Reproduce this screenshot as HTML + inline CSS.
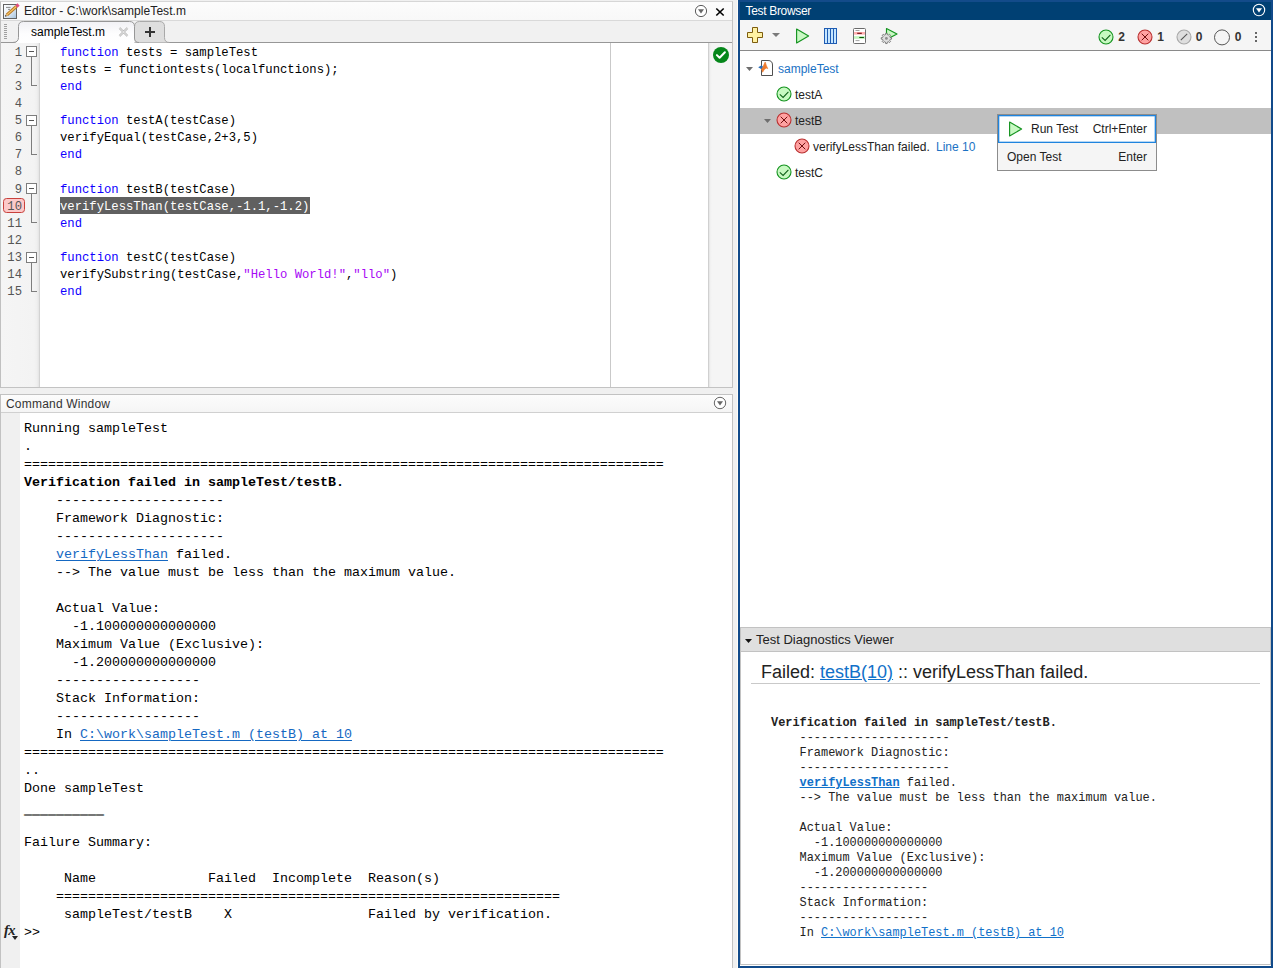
<!DOCTYPE html>
<html lang="en">
<head>
<meta charset="utf-8">
<title>MATLAB Test Browser</title>
<style>
*{box-sizing:border-box;margin:0;padding:0}
html,body{width:1273px;height:968px;overflow:hidden;background:#f0f0f0}
body{position:relative;font-family:"Liberation Sans",sans-serif;font-size:12px;color:#1a1a1a}
.abs{position:absolute}
a{color:#1171c9}
/* ---------- Editor panel ---------- */
#ed{left:0;top:1px;width:733px;height:387px;background:#fff;border:1px solid #c3c3c3;border-top-color:#d6d6d6;border-left-color:#c0c0c0}
#ed-title{left:1px;top:2px;width:731px;height:19px;background:linear-gradient(#fcfcfc,#f8f8f8);border-bottom:1px solid #d9d9d9}
#ed-title .t{left:23px;top:2px;font-size:12px;line-height:15px;color:#222;letter-spacing:.07px;white-space:nowrap}
#ed-tabs{left:1px;top:21px;width:731px;height:22px;background:#f1f1f1;border-bottom:1px solid #979797}
#tab1{left:17px;top:0;width:117px;height:22px}
#tab1 .t{left:13px;top:4px;font-size:12px;line-height:15px;color:#000;white-space:nowrap}
#grip{left:3px;top:3px;width:3px;height:15px;background:repeating-linear-gradient(#a0a0a0 0 1px,transparent 1px 2px)}
#gutter{left:1px;top:43px;width:39px;height:344px;background:linear-gradient(90deg,#f5f5f5 0,#f3f3f3 33px,#efefef 36px,#e6e6e6 37.5px,#d3d3d3 38.5px,#d3d3d3 39px)}
#code{left:40px;top:43px;width:668px;height:344px;background:#fff}
#margin-line{left:610px;top:43px;width:1px;height:344px;background:#c9c9c9}
#msgbar{left:708px;top:43px;width:24px;height:344px;background:linear-gradient(90deg,#d0d0d0 0,#d0d0d0 .6px,#e8e8e8 1.5px,#f1f1f1 2.5px,#f5f5f5 4px)}
.mono-ed{font-family:"Liberation Mono",monospace;font-size:12.22px;line-height:17px;white-space:pre}
.ln{left:0;width:22px;text-align:right;color:#555;height:17px}
.cl{left:60px;height:17px;color:#000}
.kw{color:#0e00ff}
.sel{color:#fff}
.str{color:#a709f5}
.fold{width:11px;height:11px;left:26px;border:1px solid #7d7d7d;background:#fff}
.fold:after{content:"";position:absolute;left:2px;top:4px;width:5px;height:1px;background:#555}
.fv{left:31px;width:1px;background:#7d7d7d}
.fh{left:31px;width:6px;height:1px;background:#7d7d7d}
/* ---------- Command window ---------- */
#cw{left:0;top:394px;width:733px;height:574px;background:#fff;border:1px solid #c2c2c2;border-bottom:0}
#cw-title{left:0;top:0;width:731px;height:18px;background:linear-gradient(#fcfcfc,#f5f5f5);border-bottom:1px solid #d0d0d0}
#cw-title .t{left:5px;top:2px;font-size:12px;line-height:15px;color:#333;letter-spacing:.2px;white-space:nowrap}
#cw-gut{left:0;top:18px;width:19px;height:556px;background:#f0f0f0}
#cw-text{left:23px;top:25px;font-family:"Liberation Mono",monospace;font-size:13.33px;line-height:18px;white-space:pre;color:#000}
#cw-text a{color:#1568c2;text-underline-offset:1.5px;text-decoration-thickness:1px}
/* ---------- Test browser ---------- */
#tb{left:738px;top:0;width:535px;height:968px;background:#fff;border:2px solid #114a8a;border-top:0}
#tb-head{left:0;top:0;width:531px;height:20px;background:#004073;border-top:2px solid #134b8a}
#tb-head .t{left:5.5px;top:2px;font-size:12px;line-height:15px;color:#fff;letter-spacing:-.32px;white-space:nowrap}
#tb-bar{left:0;top:20px;width:531px;height:31px;background:#f5f5f5;border-bottom:1px solid #8a8a8a}
.row{left:0;width:531px;height:26px}
.row .t{top:6px;font-size:12px;line-height:14px;white-space:nowrap;color:#222}
.cnt{top:10px;font-size:12px;line-height:14px;font-weight:bold;color:#333}
#menu{left:257px;top:114px;width:160px;height:57px;background:#f5f5f5;border:1px solid #8c8c8c}
#menu .it1{left:0;top:0;width:158px;height:28px;background:#fff;border:1px solid #1f84de;box-shadow:inset 0 0 0 .5px #6fb0ea}
#menu .t{font-size:12px;line-height:14px;color:#222;white-space:nowrap}
#dg-head{left:0;top:627px;width:531px;height:25px;background:#dfdfdf;border-top:1px solid #c2c2c2;border-bottom:1px solid #c2c2c2}
#dg-frame{left:0;top:627px;width:531px;height:338px;border:1px solid #c2c2c2;border-top:0}
#dg-head .t{left:16px;top:4px;font-size:13px;line-height:16px;color:#222;white-space:nowrap}
#dg-title{left:21px;top:662px;font-size:18px;line-height:21px;color:#222;white-space:nowrap}
#dg-hr{left:11px;top:683px;width:509px;height:1px;background:#c9c9c9}
#dg-text{left:31px;top:716px;font-family:"Liberation Mono",monospace;font-size:11.92px;line-height:15px;white-space:pre;color:#222}
</style>
</head>
<body>

<!-- ================= EDITOR ================= -->
<div id="ed" class="abs"></div>
<div id="ed-title" class="abs">
  <svg class="abs" style="left:2px;top:1px" width="18" height="17" viewBox="0 0 18 17">
    <defs><linearGradient id="pg" x1="0" y1="0" x2="1" y2="1"><stop offset="0" stop-color="#fff"/><stop offset=".45" stop-color="#e9f0f7"/><stop offset="1" stop-color="#a4c2dc"/></linearGradient></defs>
    <rect x="0.5" y="1.5" width="13" height="14" fill="url(#pg)" stroke="#636363"/>
    <path d="M3 4.4h4.6M5 6.4h2" stroke="#8a8a8a" stroke-width="1"/>
    <path d="M2 13.6L2.88 10.68L5 13.08z" fill="#c9a57a"/>
    <path d="M2 13.6L2.45 12.1L3.55 13.35z" fill="#1c1c1c"/>
    <path d="M2.88 10.68L12.31 2.32L14.43 4.72L5 13.08z" fill="#b97a26"/>
    <path d="M3.5 11.4L12.95 3.05L13.75 3.95L4.3 12.3z" fill="#f6c667"/>
    <path d="M12.31 2.32L14.54 .33L16.66 2.73L14.43 4.72z" fill="#e2507f"/>
  </svg>
  <div class="abs t">Editor - C:\work\sampleTest.m</div>
  <svg class="abs" style="left:693px;top:2px" width="14" height="14" viewBox="0 0 14 14">
    <circle cx="7" cy="7" r="5.6" fill="#fff" stroke="#5c5c5c" stroke-width="1"/>
    <path d="M4 5.3h6L7 9.6z" fill="#666"/>
  </svg>
  <svg class="abs" style="left:714px;top:4.5px" width="10" height="10" viewBox="0 0 10 10">
    <path d="M1.3 1.5L8.7 8.5M8.7 1.5L1.3 8.5" stroke="#000" stroke-width="1.6"/>
  </svg>
</div>
<div id="ed-tabs" class="abs">
  <div id="grip" class="abs"></div>
  <svg class="abs" style="left:0;top:0" width="200" height="23" viewBox="0 0 200 23">
    <defs><linearGradient id="tg" x1="0" y1="0" x2="0" y2="1"><stop offset="0" stop-color="#f1f1f5"/><stop offset=".55" stop-color="#fdfdfe"/><stop offset="1" stop-color="#fff"/></linearGradient></defs>
    <path d="M133.5 22V6Q133.5 .5 138.5 .5H158.5Q163.5 .5 163.5 5.5V16.5Q163.5 21.5 168.5 21.5H133.5z" fill="#dedede"/>
    <path d="M133.5 6Q133.5 .5 138.5 .5H158.5Q163.5 .5 163.5 5.5V16.5Q163.5 21.5 168.5 21.5" fill="none" stroke="#a9a9a9"/>
    <path d="M12.5 22Q17.5 21.5 17.5 16.5V5.5Q17.5 .5 22.5 .5H128.5Q133.5 .5 133.5 5.5V23H12.5z" fill="url(#tg)"/>
    <path d="M11.5 21.5Q17.5 21.5 17.5 16.5V5.5Q17.5 .5 22.5 .5H128.5Q133.5 .5 133.5 5.5V17Q133.5 21.5 138 21.5" fill="none" stroke="#979797"/>
    <path d="M144 11H154M149 6V16" stroke="#333" stroke-width="2"/>
    <path d="M118.5 7L126.5 15M126.5 7L118.5 15" stroke="#a9a9a9" stroke-width="2.1"/><path d="M118.5 7L126.5 15M126.5 7L118.5 15" stroke="#fff" stroke-width=".9"/>
  </svg>
  <div id="tab1" class="abs"><div class="abs t">sampleTest.m</div></div>
</div>
<div id="gutter" class="abs"></div>
<div id="code" class="abs"></div>
<div id="margin-line" class="abs"></div>
<div id="msgbar" class="abs">
  <svg class="abs" style="left:5px;top:4px" width="16" height="16" viewBox="0 0 16 16">
    <circle cx="8" cy="8" r="8" fill="#05861a"/>
    <path d="M3.9 8.1L6.6 10.8L11.9 5.2" stroke="#fff" stroke-width="2" fill="none" stroke-linecap="round" stroke-linejoin="round"/>
  </svg>
</div>
<!--EDLINES-->
<div id="edlines" class="abs mono-ed" style="left:0;top:0;width:733px;height:388px">
<div class="abs ln" style="top:45px">1</div>
<div class="abs cl" style="top:45px"><span class="kw">function</span> tests = sampleTest</div>
<div class="abs ln" style="top:62px">2</div>
<div class="abs cl" style="top:62px">tests = functiontests(localfunctions);</div>
<div class="abs ln" style="top:79px">3</div>
<div class="abs cl" style="top:79px"><span class="kw">end</span></div>
<div class="abs ln" style="top:96px">4</div>
<div class="abs ln" style="top:113px">5</div>
<div class="abs cl" style="top:113px"><span class="kw">function</span> testA(testCase)</div>
<div class="abs ln" style="top:130px">6</div>
<div class="abs cl" style="top:130px">verifyEqual(testCase,2+3,5)</div>
<div class="abs ln" style="top:147px">7</div>
<div class="abs cl" style="top:147px"><span class="kw">end</span></div>
<div class="abs ln" style="top:164px">8</div>
<div class="abs ln" style="top:182px">9</div>
<div class="abs cl" style="top:182px"><span class="kw">function</span> testB(testCase)</div>
<div class="abs" style="left:3px;top:198px;width:22px;height:15px;background:#fcc9c9;border:1px solid #c8413c;border-radius:3.5px"></div>
<div class="abs" style="left:60px;top:197px;width:250px;height:17px;background:#606060"></div>
<div class="abs ln" style="top:199px">10</div>
<div class="abs cl" style="top:199px"><span class="sel">verifyLessThan(testCase,-1.1,-1.2)</span></div>
<div class="abs ln" style="top:216px">11</div>
<div class="abs cl" style="top:216px"><span class="kw">end</span></div>
<div class="abs ln" style="top:233px">12</div>
<div class="abs ln" style="top:250px">13</div>
<div class="abs cl" style="top:250px"><span class="kw">function</span> testC(testCase)</div>
<div class="abs ln" style="top:267px">14</div>
<div class="abs cl" style="top:267px">verifySubstring(testCase,<span class="str">"Hello World!"</span>,<span class="str">"llo"</span>)</div>
<div class="abs ln" style="top:284px">15</div>
<div class="abs cl" style="top:284px"><span class="kw">end</span></div>
<div class="abs fold" style="top:46px"></div>
<div class="abs fv" style="top:57px;height:28px"></div>
<div class="abs fh" style="top:85px"></div>
<div class="abs fold" style="top:115px"></div>
<div class="abs fv" style="top:126px;height:28px"></div>
<div class="abs fh" style="top:154px"></div>
<div class="abs fold" style="top:183px"></div>
<div class="abs fv" style="top:194px;height:28px"></div>
<div class="abs fh" style="top:222px"></div>
<div class="abs fold" style="top:252px"></div>
<div class="abs fv" style="top:263px;height:28px"></div>
<div class="abs fh" style="top:291px"></div>
</div>
<!--/EDLINES-->

<!-- ================= COMMAND WINDOW ================= -->
<div id="cw" class="abs">
  <div id="cw-title" class="abs">
    <div class="abs t">Command Window</div>
    <svg class="abs" style="left:712px;top:1px" width="14" height="14" viewBox="0 0 14 14">
      <circle cx="7" cy="7" r="5.7" fill="#fff" stroke="#666" stroke-width="1"/>
      <path d="M4 5.3h6L7 9.6z" fill="#666"/>
    </svg>
  </div>
  <div id="cw-gut" class="abs"></div>
<!--CWTEXT-->
<div id="cw-text" class="abs">Running sampleTest
.
================================================================================
<b>Verification failed in sampleTest/testB.</b>
    ---------------------
    Framework Diagnostic:
    ---------------------
    <a href="#">verifyLessThan</a> failed.
    --&gt; The value must be less than the maximum value.

    Actual Value:
      -1.100000000000000
    Maximum Value (Exclusive):
      -1.200000000000000
    ------------------
    Stack Information:
    ------------------
    In <a href="#">C:\work\sampleTest.m (testB) at 10</a>
================================================================================
..
Done sampleTest
<span style="position:relative;top:3px;text-shadow:0 .6px 0 #000">__________</span>

Failure Summary:

     Name              Failed  Incomplete  Reason(s)
    ===============================================================
     sampleTest/testB    X                 Failed by verification.
&gt;&gt;</div>
<div class="abs" style="left:3px;top:527px;font-family:'Liberation Serif',serif;font-style:italic;font-weight:bold;font-size:14.5px;line-height:16px;color:#222;letter-spacing:-.6px">fx</div>
<svg class="abs" style="left:11px;top:541px" width="6" height="4" viewBox="0 0 6 4"><path d="M0 0h6L3 4z" fill="#222"/></svg>
<!--/CWTEXT-->
</div>

<div class="abs" style="left:737px;top:0;width:1px;height:968px;background:#fffdf8"></div>
<!-- ================= TEST BROWSER ================= -->
<div id="tb" class="abs">
  <div id="tb-head" class="abs">
    <div class="abs t">Test Browser</div>
    <svg class="abs" style="left:512px;top:1px" width="14" height="14" viewBox="0 0 14 14">
      <circle cx="7" cy="7" r="5.7" fill="none" stroke="#fff" stroke-width="1.1"/>
      <path d="M4 5.3h6L7 9.6z" fill="#fff"/>
    </svg>
  </div>
  <div id="tb-bar" class="abs">
<!--TBBAR-->
<svg class="abs" style="left:7px;top:7px" width="16" height="16" viewBox="0 0 16 16"><path d="M5.5 0.5h5v5h5v5h-5v5h-5v-5h-5v-5h5z" fill="#fff1a2" stroke="#7d5c0e" stroke-width="1"/></svg>
<svg class="abs" style="left:32px;top:13px" width="8" height="4" viewBox="0 0 8 4"><path d="M0 0h8L4 4z" fill="#7a7a7a"/></svg>
<svg class="abs" style="left:55px;top:8px" width="15" height="16" viewBox="0 0 15 16"><path d="M1.6 1L13.6 8L1.6 15z" fill="#c9f9c4" stroke="#14931f" stroke-width="1.15" stroke-linejoin="round"/></svg>
<svg class="abs" style="left:84px;top:8px" width="13" height="16" viewBox="0 0 13 16"><rect x="0.5" y="0.5" width="12" height="15" fill="#c6e6ff" stroke="#1f5cb3"/><path d="M3.5 0.5v15M6.5 0.5v15M9.5 0.5v15" stroke="#1f5cb3"/></svg>
<svg class="abs" style="left:113px;top:8px" width="13" height="16" viewBox="0 0 13 16"><rect x="0.5" y="0.5" width="12" height="15" rx="1" fill="#fff" stroke="#6a6a6a"/><rect x="1" y="4" width="11" height="2.6" fill="#ffb0b0"/><rect x="1" y="8.2" width="11" height="2.6" fill="#c4f6be"/><path d="M2.5 2.5h4M2.5 12.6h4" stroke="#9a9a9a" stroke-width="0.9"/><path d="M4.2 5.3h4.6" stroke="#6e0a0a" stroke-width="1.1"/><path d="M6.3 9.5h4.6" stroke="#0b5a0b" stroke-width="1.1"/></svg>
<svg class="abs" style="left:140px;top:6px" width="18" height="19" viewBox="0 0 18 19"><path d="M6.5 2.5L17 8L6.5 13.5z" fill="#c9f9c4" stroke="#14931f" stroke-width="1.15" stroke-linejoin="round"/><path d="M10.18 11.46L11.55 11.67L11.55 13.13L10.18 13.34L9.74 14.41L10.56 15.52L9.52 16.56L8.41 15.74L7.34 16.18L7.13 17.55L5.67 17.55L5.46 16.18L4.39 15.74L3.28 16.56L2.24 15.52L3.06 14.41L2.62 13.34L1.25 13.13L1.25 11.67L2.62 11.46L3.06 10.39L2.24 9.28L3.28 8.24L4.39 9.06L5.46 8.62L5.67 7.25L7.13 7.25L7.34 8.62L8.41 9.06L9.52 8.24L10.56 9.28L9.74 10.39z" fill="#dedede" stroke="#707070" stroke-width=".9" stroke-linejoin="round"/><circle cx="6.4" cy="12.4" r="1.4" fill="#8c8c8c"/></svg>
<svg class="abs" style="left:357.5px;top:9px;overflow:visible" width="16" height="16" viewBox="0 0 16 16"><circle cx="8" cy="8" r="7" fill="#c7f9c1" stroke="#14931f" stroke-width="1.1"/><path d="M3.8 8.4L7.1 11.4L12.4 5.8" stroke="#0e5f17" stroke-width="1.05" fill="none"/></svg>
<div class="abs cnt" style="left:378.29999999999995px">2</div>
<svg class="abs" style="left:396.5999999999999px;top:9px;overflow:visible" width="16" height="16" viewBox="0 0 16 16"><circle cx="8" cy="8" r="7" fill="#ffa1a1" stroke="#b83030" stroke-width="1.1"/><path d="M4.7 4.7L11.3 11.3M11.3 4.7L4.7 11.3" stroke="#6e0c0c" stroke-width="1" fill="none"/></svg>
<div class="abs cnt" style="left:417.29999999999995px">1</div>
<svg class="abs" style="left:435.5999999999999px;top:9px;overflow:visible" width="16" height="16" viewBox="0 0 16 16"><circle cx="8" cy="8" r="7" fill="#dedede" stroke="#a8a8a8" stroke-width="1.1"/><path d="M4.8 11.2L11.2 4.8" stroke="#555" stroke-width="1.05" fill="none"/></svg>
<div class="abs cnt" style="left:455.70000000000005px">0</div>
<svg class="abs" style="left:474px;top:9px;overflow:visible" width="16" height="16" viewBox="0 0 16 16"><circle cx="8" cy="8.4" r="7.5" fill="none" stroke="#555" stroke-width="1"/></svg>
<div class="abs cnt" style="left:494.70000000000005px">0</div>
<div class="abs" style="left:515px;top:12px;width:2px;height:10px;background:repeating-linear-gradient(#666 0 2px,transparent 2px 4px)"></div>
<!--/TBBAR-->
  </div>
<!--TBROWS-->
<div class="abs row" style="top:56px"><svg class="abs" style="left:5.5px;top:11px" width="7" height="4" viewBox="0 0 7 4"><path d="M0 0h7L3.5 4z" fill="#6e6e6e"/></svg><svg class="abs" style="left:18px;top:4px" width="16" height="16" viewBox="0 0 16 16"><path d="M3.5 0.5H10Q14.5 0.5 14.5 5V15.5H3.5z" fill="#fff" stroke="#505050" stroke-width="1"/><path d="M3.2 9L5 6.8L7.2 2.1L8.3 5.5L9.7 8.6L8.2 8L6.2 9.6L4.6 12.2L4 10.2z" fill="#ee7a2c" stroke="#ee7a2c" stroke-width=".7" stroke-linejoin="round"/><path d="M0.2 7.3L3.6 5.2L5 6.8L3.2 9L2.2 8.4z" fill="#2a6db8"/></svg><div class="abs t" style="left:38px;color:#1b72c4">sampleTest</div></div>
<div class="abs row" style="top:82px"><svg class="abs" style="left:35.60000000000002px;top:3.5px;overflow:visible" width="16" height="16" viewBox="0 0 16 16"><circle cx="8" cy="8" r="7" fill="#c7f9c1" stroke="#14931f" stroke-width="1.1"/><path d="M3.8 8.4L7.1 11.4L12.4 5.8" stroke="#0e5f17" stroke-width="1.05" fill="none"/></svg><div class="abs t" style="left:55px">testA</div></div>
<div class="abs row" style="top:108px;background:#c0c0c0"><svg class="abs" style="left:24px;top:11px" width="7" height="4" viewBox="0 0 7 4"><path d="M0 0h7L3.5 4z" fill="#6e6e6e"/></svg><svg class="abs" style="left:35.60000000000002px;top:3.5px;overflow:visible" width="16" height="16" viewBox="0 0 16 16"><circle cx="8" cy="8" r="7" fill="#ffa1a1" stroke="#b83030" stroke-width="1.1"/><path d="M4.7 4.7L11.3 11.3M11.3 4.7L4.7 11.3" stroke="#6e0c0c" stroke-width="1" fill="none"/></svg><div class="abs t" style="left:55px">testB</div></div>
<div class="abs row" style="top:134px"><svg class="abs" style="left:53.5px;top:3.5px;overflow:visible" width="16" height="16" viewBox="0 0 16 16"><circle cx="8" cy="8" r="7" fill="#ffa1a1" stroke="#b83030" stroke-width="1.1"/><path d="M4.7 4.7L11.3 11.3M11.3 4.7L4.7 11.3" stroke="#6e0c0c" stroke-width="1" fill="none"/></svg><div class="abs t" style="left:73px">verifyLessThan failed.</div><div class="abs t" style="left:196px;color:#1b72c4">Line 10</div></div>
<div class="abs row" style="top:160px"><svg class="abs" style="left:35.60000000000002px;top:3.5px;overflow:visible" width="16" height="16" viewBox="0 0 16 16"><circle cx="8" cy="8" r="7" fill="#c7f9c1" stroke="#14931f" stroke-width="1.1"/><path d="M3.8 8.4L7.1 11.4L12.4 5.8" stroke="#0e5f17" stroke-width="1.05" fill="none"/></svg><div class="abs t" style="left:55px">testC</div></div>
<!--/TBROWS-->
<!--MENU-->
<div id="menu" class="abs"><div class="abs it1"></div><svg class="abs" style="left:10px;top:6px" width="15" height="16" viewBox="0 0 15 16"><path d="M1.6 1L13.6 8L1.6 15z" fill="#c9f9c4" stroke="#14931f" stroke-width="1.15" stroke-linejoin="round"/></svg><div class="abs t" style="left:33px;top:7px">Run Test</div><div class="abs t" style="right:9px;top:7px">Ctrl+Enter</div><div class="abs t" style="left:9px;top:35px">Open Test</div><div class="abs t" style="right:9px;top:35px">Enter</div></div>
<!--/MENU-->
<!--DIAG-->
<div id="dg-head" class="abs"><svg class="abs" style="left:5px;top:11px" width="7" height="4" viewBox="0 0 7 4"><path d="M0 0h7L3.5 4z" fill="#111"/></svg><div class="abs t">Test Diagnostics Viewer</div></div><div id="dg-title" class="abs">Failed: <a href="#">testB(10)</a> :: verifyLessThan failed.</div><div id="dg-hr" class="abs"></div><div id="dg-text" class="abs"><b>Verification failed in sampleTest/testB.</b>
    ---------------------
    Framework Diagnostic:
    ---------------------
    <a href="#"><b>verifyLessThan</b></a> failed.
    --&gt; The value must be less than the maximum value.

    Actual Value:
      -1.100000000000000
    Maximum Value (Exclusive):
      -1.200000000000000
    ------------------
    Stack Information:
    ------------------
    In <a href="#">C:\work\sampleTest.m (testB) at 10</a></div><div id="dg-frame" class="abs"></div>
<!--/DIAG-->
</div>

</body>
</html>
